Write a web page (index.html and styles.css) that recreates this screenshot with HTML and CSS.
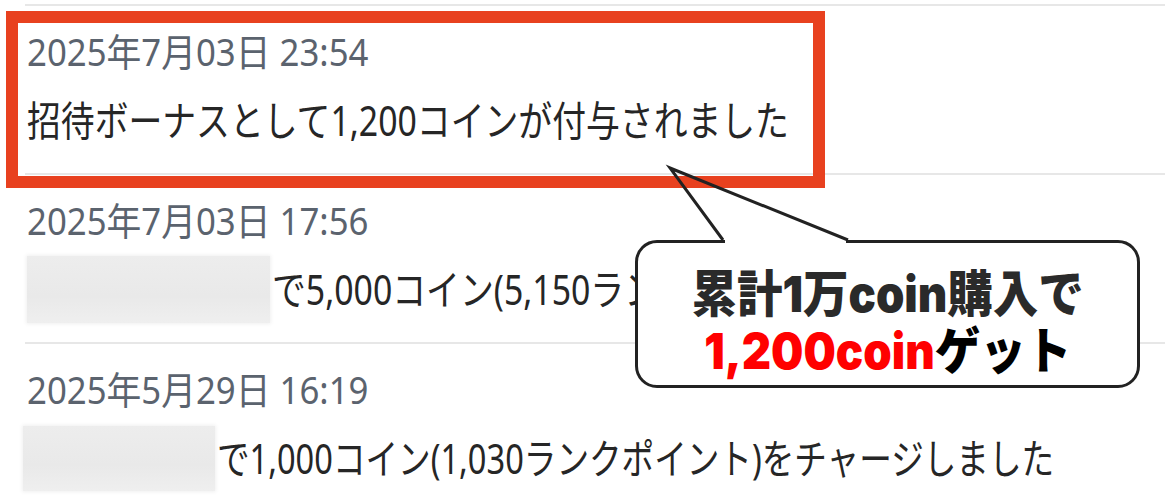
FILE: index.html
```html
<!DOCTYPE html>
<html lang="ja">
<head>
<meta charset="utf-8">
<title>コイン履歴</title>
<link rel="stylesheet" href="styles.css">
</head>
<body>
<div class="page">
  <div class="list">
    <div class="row">
      <div class="date"><span class="sx-date">2025年7月03日 23:54</span></div>
      <div class="main"><span class="sx-main">招待ボーナスとして1,200コインが付与されました</span></div>
    </div>
    <div class="row">
      <div class="date"><span class="sx-date">2025年7月03日 17:56</span></div>
      <div class="main">
        <span class="blur blur-a"></span>
        <span class="sx-main">で5,000コイン(5,150ランクポイント)をチャージしました</span>
      </div>
    </div>
    <div class="row">
      <div class="date"><span class="sx-date">2025年5月29日 16:19</span></div>
      <div class="main">
        <span class="blur blur-b"></span>
        <span class="sx-main sx-tight">で1,000コイン(1,030ランクポイント)をチャージしました</span>
      </div>
    </div>
  </div>

  <div class="highlight"></div>

  <div class="bubble">
    <svg class="tail" width="200" height="84" viewBox="0 0 200 84">
      <rect x="57" y="72" width="121" height="6" fill="#ffffff"/>
      <polyline points="55,74 2,2 180,74" fill="none" stroke="#222222" stroke-width="3" stroke-linejoin="miter"/>
    </svg>
    <div class="b-line b-line1"><span class="sx-b">累計1万coin購入で</span></div>
    <div class="b-line b-line2"><span class="sx-b"><span class="red">1,200coin</span><span class="blk">ゲット</span></span></div>
  </div>
</div>
</body>
</html>
```

FILE: styles.css
```css
html, body {
  margin: 0;
  padding: 0;
  background: #ffffff;
  overflow: hidden;
}

.page {
  position: relative;
  width: 1165px;
  height: 500px;
  overflow: hidden;
  font-family: "Noto Sans", "Noto Sans CJK JP", sans-serif;
}

.list {
  margin-top: 4px;
  margin-left: 25px;
  border-top: 2px solid #e7e7e7;
}

.row {
  display: flex;
  flex-direction: column;
  gap: 22px;
  padding: 23px 0 28px 2px;
  border-bottom: 2px solid #e7e7e7;
}

.date {
  height: 44px;
  font-size: 38px;
  line-height: 44px;
  color: #5b636e;
  white-space: nowrap;
}

.sx-date {
  display: inline-block;
  transform: scaleX(0.915);
  transform-origin: left center;
}

.main {
  display: flex;
  align-items: center;
  height: 50px;
  font-size: 41px;
  line-height: 50px;
  color: #262626;
  white-space: nowrap;
}

.sx-main {
  display: inline-block;
  flex-shrink: 0;
  transform: scaleX(0.825);
  transform-origin: left center;
}

.sx-tight {
  transform: scaleX(0.795);
}

.blur {
  flex-shrink: 0;
  display: block;
  background: linear-gradient(180deg, #ededed 0%, #e9e9e9 60%, #efefef 100%);
  box-shadow: 0 0 4px 1px #f0f0f0;
}

.blur-a {
  width: 243px;
  height: 67px;
  margin-right: 2px;
}

.blur-b {
  width: 192px;
  height: 65px;
  margin-left: -4px;
  margin-right: 2px;
}

.highlight {
  position: absolute;
  left: 6px;
  top: 11px;
  width: 819px;
  height: 177px;
  box-sizing: border-box;
  border: 12px solid #e8411f;
}

.bubble {
  position: absolute;
  left: 635px;
  top: 240px;
  width: 505px;
  height: 148px;
  box-sizing: border-box;
  border: 3px solid #222222;
  border-radius: 22px;
  background: #ffffff;
  display: flex;
  flex-direction: column;
  align-items: center;
  justify-content: center;
  padding-top: 18px;
  font-family: Inter, "Noto Sans CJK JP", sans-serif;
  font-weight: 900;
  font-size: 50px;
  line-height: 57px;
}

.tail {
  position: absolute;
  left: 30px;
  top: -77px;
  overflow: visible;
}

.b-line {
  white-space: nowrap;
  width: 100%;
  display: flex;
  justify-content: center;
}

.sx-b {
  display: inline-block;
  transform: scaleX(0.91);
  transform-origin: center center;
}

.b-line1 {
  color: #2a2a2a;
}

.red {
  color: #ff0000;
}

.blk {
  color: #000000;
}
```
